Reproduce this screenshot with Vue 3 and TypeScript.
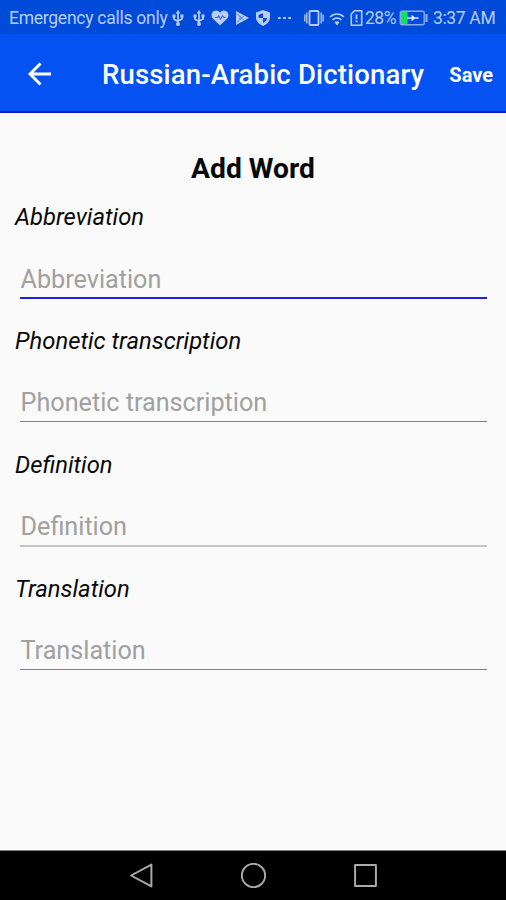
<script setup lang="ts">
import { ref } from 'vue'

interface Field {
  name: string
  tone: string
}

const fields: Field[] = [
  { name: 'Abbreviation', tone: 'active' },
  { name: 'Phonetic transcription', tone: 'dark' },
  { name: 'Definition', tone: 'soft' },
  { name: 'Translation', tone: 'dark' },
]
const values = ref<string[]>(fields.map(() => ''))
</script>

<template>
  <div class="screen">
    <div class="status">
      <span class="carrier">Emergency calls only</span>
      <div class="notices">
        <svg v-for="n in 2" :key="n" class="usb" viewBox="0 0 12 16">
          <path d="M6 2.500V13M2 6v3.200L6 11.500M10 6v3L6 11" fill="none" stroke="currentColor" stroke-width="1.700" />
          <path d="M6 0 8.300 3.600H3.700z" fill="currentColor" />
          <circle cx="6" cy="14" r="2" fill="currentColor" />
          <path d="M.5 4.500h3v3h-3zM8.500 4.500h3v3h-3z" fill="currentColor" />
        </svg>
        <svg class="heart" viewBox="0 0 18 16">
          <path d="M9 15.500 2 8.700C-.3 6.200.3 2.500 3 1.100 5.200 0 7.500.7 9 2.700 10.500.7 12.800 0 15 1.100c2.700 1.400 3.300 5.100 1 7.600z" fill="currentColor" />
          <path d="M4 7.500h2.500l1.300-1.500 1.700 3 2-3L13 7.500h1.500" fill="none" stroke="#3d6fe3" stroke-width="1.200" />
        </svg>
        <svg class="play" viewBox="0 0 14 14">
          <path d="M1 0 14 7 1 14z" fill="currentColor" />
          <path d="M2 2.500 8.500 9M2 11.500 8.500 5M5 5.500v3" fill="none" stroke="#3d6fe3" stroke-width=".9" />
        </svg>
        <svg class="shield" viewBox="0 0 14 16">
          <path d="M7 0 14 2.500v5c0 4-3.500 7-7 8.500-3.500-1.500-7-4.500-7-8.500v-5z" fill="currentColor" />
          <path d="M7 3.300V8H2.600V4.800zM7 8h4.200c-.3 2.200-2 3.900-4.200 5z" fill="#0a49d9" />
        </svg>
        <svg class="dots" viewBox="0 0 14 4">
          <path d="M0 1h2.600v2H0zM5.200 1h2.600v2H5.200zM10.400 1H13v2h-2.600z" fill="currentColor" />
        </svg>
      </div>
      <div class="system">
        <svg class="vibrate" viewBox="0 0 20 16">
          <rect x="5.500" y="1" width="9" height="14" rx="1" fill="none" stroke="currentColor" stroke-width="1.800" />
          <path d="M2.800 2.500v11M.8 4.500v7M17.200 2.500v11M19.200 4.500v7" stroke="currentColor" stroke-width="1.300" />
        </svg>
        <svg class="wifi" viewBox="0 0 16 14">
          <path d="M1 5C5 .9 11 .9 15 5M3.500 8c2.600-2.500 6.400-2.500 9 0" fill="none" stroke="currentColor" stroke-width="1.600" />
          <path d="M5.500 10.300C7 9 9 9 10.500 10.300L8 13.500z" fill="currentColor" />
        </svg>
        <svg class="sim" viewBox="0 0 12 16">
          <path d="M4 .8h7.200v14.400H.8V4z" fill="none" stroke="currentColor" stroke-width="1.600" stroke-linejoin="round" />
          <path d="M6 4.500v4.800M6 10.500v1.800" stroke="currentColor" stroke-width="1.800" />
        </svg>
        <span class="percent">28%</span>
        <svg class="battery" viewBox="0 0 29 16">
          <rect x=".8" y="1.300" width="23.900" height="13.400" rx="1.500" fill="none" stroke="#8ba9ed" stroke-width="1.400" />
          <rect x="1.500" y="2" width="6.500" height="12" fill="#08e45c" />
          <path d="M7.500 7.300H12V4.800l3.300 2.500H19v1.400h-3.700L12 11.200V8.700H7.500z" fill="#e2eaff" />
          <path d="M27 4v8" stroke="#8ba9ed" stroke-width="2.200" />
        </svg>
        <span class="clock">3:37 AM</span>
      </div>
    </div>

    <header class="bar">
      <button class="back" aria-label="Back">
        <svg viewBox="0 0 24 24">
          <path d="M12.500 1.500 2 12l10.500 10.500M2 12h21" fill="none" stroke="currentColor" stroke-width="2.900" />
        </svg>
      </button>
      <span class="title">Russian-Arabic Dictionary</span>
      <button class="save">Save</button>
    </header>

    <main class="form">
      <h1 class="heading">Add Word</h1>
      <label v-for="(field, i) in fields" :key="field.name" class="field">
        <span class="label">{{ field.name }}</span>
        <span class="entry" :class="field.tone">
          <input v-model="values[i]" class="input" :placeholder="field.name" />
        </span>
      </label>
    </main>

    <nav class="nav">
      <svg viewBox="0 0 24 24"><path d="M21.500 1.500v21L2 12z" /></svg>
      <svg viewBox="0 0 24 24"><circle cx="12" cy="12" r="11.200" /></svg>
      <svg viewBox="0 0 24 24"><rect x="2" y="2" width="20" height="20" /></svg>
    </nav>
  </div>
</template>

<style>
body {
  margin: 0;
}
</style>

<style scoped>
.screen {
  width: 506px;
  height: 900px;
  display: flex;
  flex-direction: column;
  overflow: hidden;
  background: #fafafa;
  color: #080808;
  font-family: Roboto, sans-serif;
}
svg {
  display: block;
  flex: none;
}
.status {
  flex: none;
  height: 34px;
  box-sizing: border-box;
  padding: 2px 10px 0 9px;
  display: flex;
  align-items: center;
  background: #004ad9;
  color: #b8cdfb;
  font-size: 17.500px;
  white-space: nowrap;
}
.carrier {
  width: 163px;
  letter-spacing: -0.260px;
}
.notices {
  display: flex;
  align-items: center;
}
.usb {
  width: 12px;
  height: 16px;
  margin-right: 9px;
}
.heart {
  width: 18px;
  height: 16px;
  margin-left: -3px;
}
.play {
  width: 14px;
  height: 14px;
  margin-left: 6px;
}
.shield {
  width: 14px;
  height: 16px;
  margin-left: 7px;
}
.dots {
  width: 14px;
  height: 4px;
  margin-left: 8px;
}
.system {
  display: flex;
  align-items: center;
  margin-left: auto;
}
.vibrate {
  width: 20px;
  height: 16px;
}
.wifi {
  width: 16px;
  height: 14px;
  margin: 1px 5px 0;
}
.sim {
  width: 13px;
  height: 16px;
}
.percent {
  width: 34px;
  margin-left: 2px;
  letter-spacing: -0.500px;
}
.battery {
  width: 30px;
  height: 16px;
}
.clock {
  width: 63px;
  margin-left: 4px;
  letter-spacing: -0.350px;
}
.bar {
  flex: none;
  height: 79px;
  box-sizing: border-box;
  display: flex;
  align-items: center;
  padding: 4px 13px 0 28px;
  border-bottom: 2px solid #0d1bcb;
  background: #0452f1;
  color: #fff;
  white-space: nowrap;
}
button {
  border: 0;
  padding: 0;
  background: none;
  color: inherit;
  font-family: inherit;
}
.back svg {
  width: 24px;
  height: 24px;
  margin-top: -2px;
}
.title {
  margin-left: 50px;
  font-size: 27.500px;
  font-weight: 500;
  letter-spacing: 0.170px;
}
.save {
  margin-left: auto;
  font-size: 20px;
  font-weight: 700;
}
.form {
  flex: 1;
  padding: 38px 15px 0;
}
.heading {
  margin: 0;
  height: 36px;
  line-height: 36px;
  font-size: 28.200px;
  font-weight: 700;
  text-align: center;
}
.field {
  display: block;
  height: 123.850px;
  padding-top: 13px;
  box-sizing: border-box;
}
.label {
  display: block;
  height: 34px;
  line-height: 34px;
  font-size: 23.800px;
  font-style: italic;
}
.entry {
  display: block;
  width: 467px;
  margin: 22px 0 0 5px;
  border-bottom: 1px solid #808080;
}
.input {
  display: block;
  box-sizing: border-box;
  width: 100%;
  height: 41px;
  padding: 5px 0 0 0.500px;
  border: 0;
  outline: 0;
  background: none;
  color: #080808;
  font: 25.200px Roboto, sans-serif;
}
.input::placeholder {
  color: #a0a0a0;
  opacity: 1;
}
.entry.active {
  border-bottom: 2px solid #2020e0;
}
.entry.soft {
  border-bottom: 2px solid #c4c4c4;
}
.nav {
  flex: none;
  height: 50px;
  box-sizing: border-box;
  border-top: 1px solid #777;
  padding-left: 1px;
  display: flex;
  justify-content: center;
  align-items: center;
  gap: 88px;
  background: #000;
}
.nav svg {
  width: 25px;
  height: 25px;
  margin: -1px -0.500px 0;
  fill: none;
  stroke: #aaa;
  stroke-width: 1.900;
  stroke-linejoin: round;
}
</style>
